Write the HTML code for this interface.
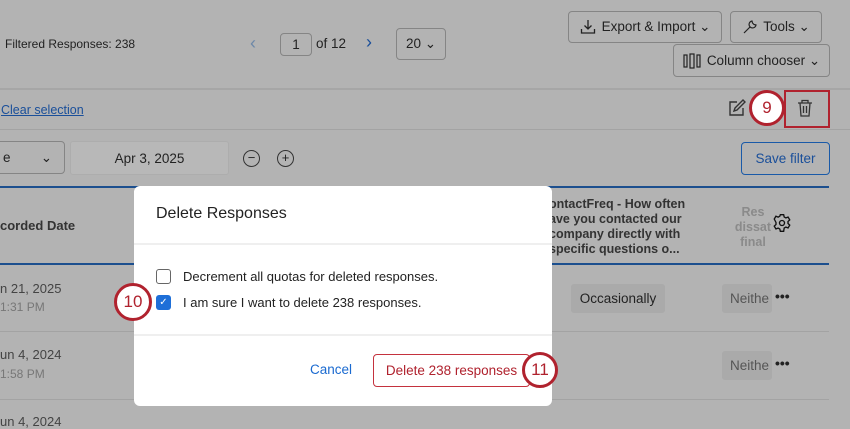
<!DOCTYPE html>
<html><head><meta charset="utf-8"><style>
*{box-sizing:border-box;margin:0;padding:0}
body{width:850px;height:425px;overflow:hidden;background:#b3b3b3;font-family:"Liberation Sans",sans-serif;color:#222;position:relative;font-size:13px}
.a{position:absolute;white-space:nowrap}
.btn{position:absolute;border:1px solid #858585;border-radius:4px;display:flex;align-items:center;justify-content:center;font-size:13.5px;color:#222}
.circ{position:absolute;border-radius:50%;background:#fff;border:3px solid #b0222e;color:#b0222e;display:flex;align-items:center;justify-content:center;font-size:17px}
.hl{position:absolute;height:1px;background:#a3a3a3}
</style></head><body>
<div class="a" style="left:5px;top:37px;font-size:12px">Filtered Responses: 238</div>
<div class="a" style="left:250px;top:33px;font-size:18px;color:#6d88a8">‹</div>
<div class="btn" style="left:280px;top:33px;width:32px;height:23px">1</div>
<div class="a" style="left:316px;top:36px;font-size:13.5px">of 12</div>
<div class="a" style="left:366px;top:32px;font-size:18px;color:#1a4f9a">›</div>
<div class="btn" style="left:396px;top:28px;width:50px;height:32px">20 ⌄</div>
<div class="btn" style="left:568px;top:11px;width:154px;height:32px"><svg width="16" height="16" viewBox="0 0 16 16" style="margin-right:6px" fill="none" stroke="#222" stroke-width="1.3"><path d="M8 1v9M4.5 6.5L8 10l3.5-3.5M1.5 10v4h13v-4"/></svg>Export &amp; Import ⌄</div>
<div class="btn" style="left:730px;top:11px;width:92px;height:32px"><svg width="16" height="16" viewBox="0 0 16 16" style="margin-right:5px" fill="none" stroke="#222" stroke-width="1.2"><path d="M2 14l6-6M10 2a3.5 3.5 0 1 0 4 4l-2-0.5-1.5-1.5L10 2z"/></svg>Tools ⌄</div>
<div class="btn" style="left:673px;top:44px;width:157px;height:33px"><svg width="18" height="16" viewBox="0 0 18 16" style="margin-right:6px" fill="none" stroke="#222" stroke-width="1.2"><rect x="1" y="2" width="3" height="12"/><rect x="7" y="1" width="4" height="14"/><rect x="14" y="2" width="3" height="12"/></svg>Column chooser ⌄</div>
<div class="hl" style="left:0;top:88px;width:850px;height:2px;background:#a6a6a6"></div>
<div class="a" style="left:1px;top:103px;font-size:12.5px;color:#1a4f9a;text-decoration:underline">Clear selection</div>
<svg class="a" style="left:728px;top:99px" width="18" height="18" viewBox="0 0 18 18" fill="none" stroke="#333" stroke-width="1.4"><path d="M9 3H2v13h13V9M6 12l1-3 8-8 2 2-8 8z"/></svg>
<div class="circ" style="left:749px;top:90px;width:36px;height:36px">9</div>
<div class="a" style="left:784px;top:90px;width:46px;height:38px;border:2px solid #b0222e"></div>
<svg class="a" style="left:797px;top:99px" width="16" height="18" viewBox="0 0 16 18" fill="none" stroke="#333" stroke-width="1.3"><path d="M1 4h14M5 4V1.5h6V4M3 4l1 13h8l1-13M6.5 7v7M9.5 7v7"/></svg>
<div class="hl" style="left:0;top:129px;width:850px"></div>
<div class="btn" style="left:-10px;top:141px;width:75px;height:33px;justify-content:space-between;padding:0 12px">e<span>⌄</span></div>
<div class="a" style="left:70px;top:141px;width:159px;height:34px;background:#b8b8b8;border-radius:3px;border:1px solid #adadad;display:flex;align-items:center;justify-content:center;font-size:13.5px">Apr 3, 2025</div>
<div class="a" style="left:243px;top:150px;width:17px;height:17px;border:1.3px solid #333;border-radius:50%;text-align:center;line-height:14px">−</div>
<div class="a" style="left:277px;top:150px;width:17px;height:17px;border:1.3px solid #333;border-radius:50%;text-align:center;line-height:14px">+</div>
<div class="btn" style="left:741px;top:142px;width:89px;height:33px;border-color:#1a5aa8;color:#1a4f9a">Save filter</div>
<div class="hl" style="left:0;top:186px;width:829px;height:2px;background:#1c4f8e"></div>
<div class="a" style="left:0;top:218px;font-weight:bold;font-size:13px;color:#333">corded Date</div>
<div class="a" style="left:549px;top:197px;font-weight:bold;font-size:12.5px;line-height:15px;color:#333">ontactFreq - How often<br>ave you contacted our<br>company directly with<br>specific questions o...</div>
<div class="a" style="left:728px;top:205px;font-weight:bold;font-size:12.5px;line-height:15px;color:#8a8a8a;text-align:center;width:44px;overflow:hidden;padding-left:3px">
<div style="width:60px;margin-left:-8px">Res<br>dissat<br>final</div></div>
<svg class="a" style="left:772px;top:213px" width="20" height="20" viewBox="0 0 24 24" fill="none" stroke="#111" stroke-width="1.6"><circle cx="12" cy="12" r="3"/><path d="M10 2h4l.6 2.8 2 1.1 2.7-1 2 3.4-2.1 1.9v2.4l2.1 1.9-2 3.4-2.7-1-2 1.1L14 22h-4l-.6-2.8-2-1.1-2.7 1-2-3.4 2.1-1.9v-2.4L2.7 7.3l2-3.4 2.7 1 2-1.1z"/></svg>
<div class="hl" style="left:0;top:263px;width:829px;height:2px;background:#1c4f8e"></div>
<div class="a" style="left:0;top:281px;font-size:13px;color:#444">n 21, 2025</div>
<div class="a" style="left:0;top:300px;font-size:12px;color:#777">1:31 PM</div>
<div class="a" style="left:571px;top:284px;width:94px;height:29px;background:#aaa;border-radius:3px;display:flex;align-items:center;justify-content:center;font-size:13.5px">Occasionally</div>
<div class="a" style="left:722px;top:284px;width:50px;height:29px;background:#aaa;border-radius:3px;padding:7px 0 0 8px;font-size:13.5px;color:#555;overflow:hidden">Neithe</div>
<div class="a" style="left:775px;top:288px;font-size:14px;font-weight:bold">•••</div>
<div class="hl" style="left:0;top:331px;width:829px"></div>
<div class="a" style="left:0;top:347px;font-size:13px;color:#444">un 4, 2024</div>
<div class="a" style="left:0;top:367px;font-size:12px;color:#777">1:58 PM</div>
<div class="a" style="left:722px;top:351px;width:50px;height:29px;background:#aaa;border-radius:3px;padding:7px 0 0 8px;font-size:13.5px;color:#555;overflow:hidden">Neithe</div>
<div class="a" style="left:775px;top:355px;font-size:14px;font-weight:bold">•••</div>
<div class="hl" style="left:0;top:399px;width:829px"></div>
<div class="a" style="left:0;top:414px;font-size:13px;color:#444">un 4, 2024</div>

<div class="a" style="left:134px;top:186px;width:418px;height:220px;background:#fff;border-radius:6px">
<div class="a" style="left:22px;top:19px;font-size:16px;color:#222">Delete Responses</div>
<div class="a" style="left:0;top:57px;width:418px;height:2px;background:#efefef"></div>
<div class="a" style="left:22px;top:83px;width:15px;height:15px;border:1.3px solid #666;border-radius:3px"></div>
<div class="a" style="left:49px;top:83px;font-size:13px">Decrement all quotas for deleted responses.</div>
<div class="a" style="left:22px;top:109px;width:15px;height:15px;background:#1e6fd8;border-radius:3px;color:#fff;font-size:10px;text-align:center;line-height:15px">✓</div>
<div class="a" style="left:49px;top:109px;font-size:13px">I am sure I want to delete 238 responses.</div>
<div class="a" style="left:0;top:148px;width:418px;height:2px;background:#efefef"></div>
<div class="a" style="left:176px;top:176px;font-size:13.5px;color:#1a6ad0">Cancel</div>
<div class="a" style="left:239px;top:168px;width:157px;height:33px;border:1px solid #c4323e;border-radius:4px;color:#b0222e;font-size:13.5px;display:flex;align-items:center;justify-content:center">Delete 238 responses</div>
</div>
<div class="circ" style="left:114px;top:283px;width:38px;height:38px">10</div>
<div class="circ" style="left:522px;top:352px;width:36px;height:36px">11</div>
</body></html>
